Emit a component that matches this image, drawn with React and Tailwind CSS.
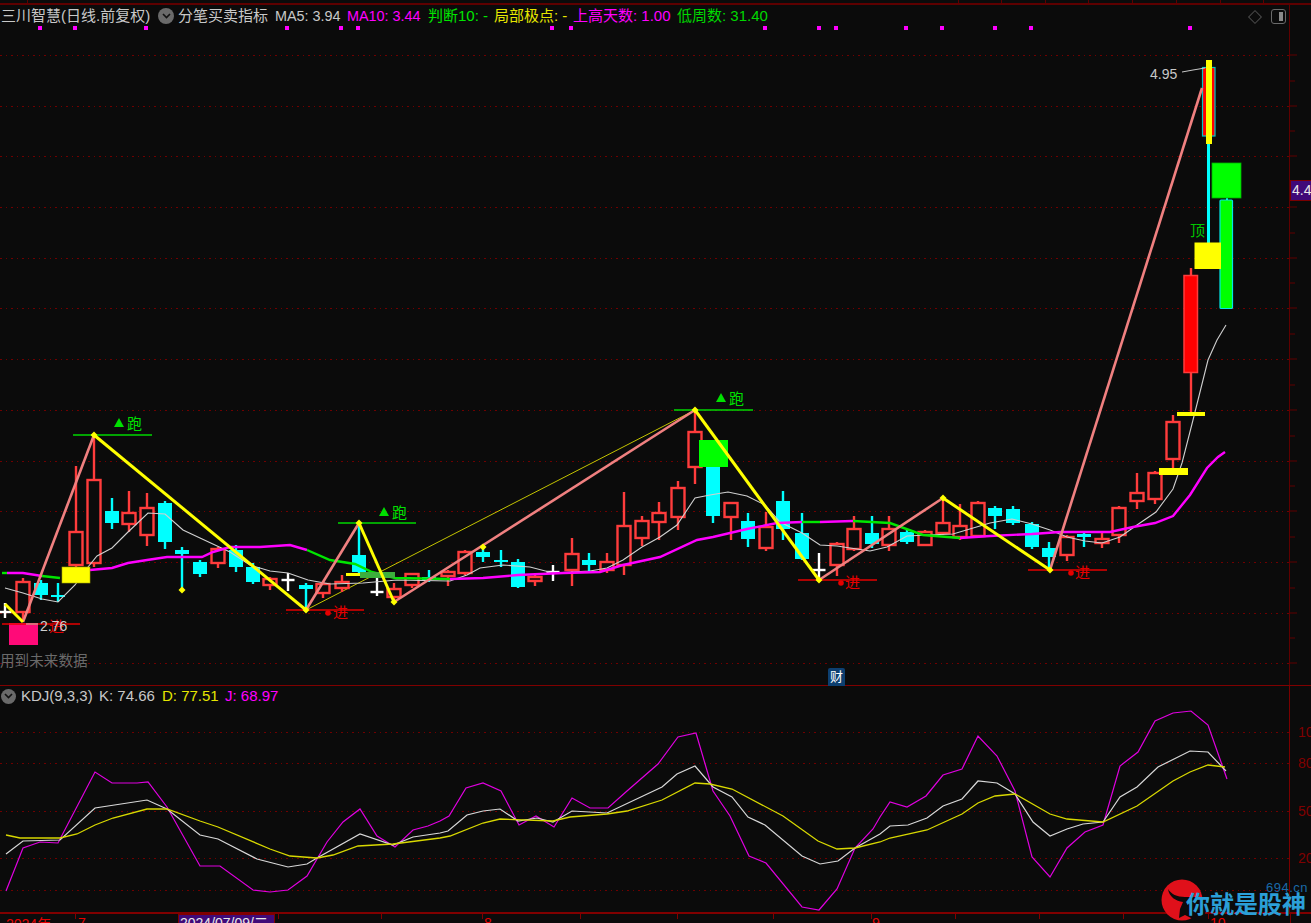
const BG = "#0b0b0b";
const FONT = '"Liberation Sans", "Noto Sans CJK SC", sans-serif';

// x, wickTop, bodyTop, bodyBottom, wickBottom, type (r = hollow red, c = solid cyan, w = white cross)
const candles = [
  [5, 603, 611, 612, 618, "w"],
  [23, 578, 582, 612, 620, "r"],
  [41, 580, 583, 595, 600, "c"],
  [58, 583, 595, 597, 602, "c"],
  [76, 466, 532, 565, 568, "r"],
  [94, 435, 480, 563, 567, "r"],
  [112, 498, 511, 523, 529, "c"],
  [129, 491, 513, 524, 532, "r"],
  [147, 493, 508, 535, 546, "r"],
  [165, 501, 503, 542, 549, "c"],
  [182, 547, 550, 554, 590, "c"],
  [200, 560, 562, 574, 577, "c"],
  [218, 547, 549, 563, 568, "r"],
  [236, 545, 550, 567, 572, "c"],
  [253, 563, 567, 582, 584, "c"],
  [270, 577, 579, 585, 590, "r"],
  [288, 573, 579, 580, 591, "w"],
  [306, 583, 585, 589, 609, "c"],
  [323, 582, 584, 593, 598, "r"],
  [342, 575, 582, 588, 592, "r"],
  [359, 523, 555, 572, 574, "c"],
  [377, 578, 591, 592, 596, "w"],
  [394, 583, 589, 597, 602, "r"],
  [412, 573, 574, 585, 588, "r"],
  [429, 570, 577, 580, 582, "c"],
  [448, 570, 572, 576, 586, "r"],
  [465, 550, 552, 573, 575, "r"],
  [483, 545, 552, 557, 562, "c"],
  [501, 550, 560, 562, 567, "c"],
  [518, 559, 562, 587, 588, "c"],
  [535, 575, 577, 581, 586, "r"],
  [553, 565, 571, 572, 581, "w"],
  [572, 538, 554, 570, 586, "r"],
  [589, 553, 560, 565, 571, "c"],
  [607, 553, 562, 570, 573, "r"],
  [624, 492, 526, 565, 575, "r"],
  [642, 516, 521, 538, 546, "r"],
  [659, 502, 513, 522, 540, "r"],
  [678, 481, 488, 517, 530, "r"],
  [695, 410, 432, 467, 484, "r"],
  [713, 440, 467, 516, 523, "c"],
  [731, 503, 503, 517, 540, "r"],
  [748, 513, 521, 539, 547, "c"],
  [766, 512, 527, 548, 551, "r"],
  [783, 491, 501, 529, 540, "c"],
  [802, 513, 533, 559, 560, "c"],
  [819, 553, 569, 570, 582, "w"],
  [837, 542, 544, 565, 576, "r"],
  [854, 516, 529, 549, 551, "r"],
  [872, 516, 533, 544, 548, "c"],
  [889, 516, 529, 545, 551, "r"],
  [907, 530, 532, 542, 544, "c"],
  [925, 530, 532, 545, 546, "r"],
  [943, 498, 523, 533, 535, "r"],
  [960, 504, 526, 537, 540, "r"],
  [978, 501, 503, 536, 538, "r"],
  [995, 506, 508, 516, 529, "c"],
  [1013, 506, 509, 523, 525, "c"],
  [1032, 522, 524, 547, 549, "c"],
  [1049, 542, 548, 557, 570, "c"],
  [1067, 535, 537, 555, 561, "r"],
  [1084, 532, 534, 537, 547, "c"],
  [1102, 532, 539, 543, 548, "r"],
  [1119, 506, 508, 535, 543, "r"],
  [1137, 473, 493, 501, 509, "r"],
  [1155, 471, 473, 499, 504, "r"],
  [1173, 415, 422, 459, 468, "r"],
];

const ma5 =
  "5,588 23,593 42,599 58,602 75,585 88,567 97,556 112,548 127,533 148,513 165,514 183,530 200,538 230,552 250,565 270,571 288,573 308,580 330,584 363,583 397,580 450,581 467,575 480,568 503,565 530,567 553,573 590,571 607,568 623,560 642,547 660,537 677,525 695,498 710,495 728,492 747,496 765,505 780,522 802,533 820,545 837,546 870,551 887,547 907,536 927,535 953,534 990,523 1012,519 1032,524 1050,530 1067,537 1085,541 1102,543 1120,537 1137,525 1156,512 1173,489 1182,463 1193,420 1208,360 1217,340 1226,325";

const maPink = [
  "7,573 23,573 42,576",
  "90,570 112,568 128,563 147,560 167,557 202,557 213,552 230,547 260,547 290,545 307,550",
  "450,579 483,578 518,575 563,573 600,572 623,565 660,557 697,540 713,537 747,529 777,523 802,522",
  "820,522 853,521",
  "960,538 990,536 1032,534 1060,532 1110,532 1133,527 1155,523 1173,516 1190,495 1207,468 1218,457 1225,452",
];
const maGreen = [
  "2,573 7,573",
  "42,576 60,578",
  "307,550 330,560 355,564 372,572 395,578 450,579",
  "802,522 820,522",
  "853,521 890,523 923,535 960,538",
];

const zigPink = [
  [23, 622, 94, 435],
  [306, 610, 359, 523],
  [394, 602, 695, 410],
  [819, 580, 943, 498],
  [1050, 570, 1202, 88],
];
const zigYellow = [
  [5, 604, 23, 622],
  [94, 435, 306, 610],
  [359, 523, 394, 602],
  [695, 410, 819, 580],
  [943, 498, 1050, 570],
];
const diamonds = [[94, 435], [182, 590], [306, 610], [359, 523], [394, 602], [483, 547], [695, 410], [819, 580], [943, 498], [1050, 570]];

const runMarks = [[114, 427], [379, 516], [716, 402]];
const entryMarks = [[328, 613, 333, 618], [841, 583, 845, 588], [1071, 573, 1075, 578]];

const priceGrid = [55, 106, 156, 207, 258, 308, 359, 410, 461, 511, 562, 613, 663];
const priceTicks = [81, 131, 182, 233, 283, 334, 385, 436, 486, 537, 588, 638];
const dots = [40, 75, 146, 287, 341, 358, 552, 571, 765, 819, 836, 906, 942, 995, 1031, 1190];
const topTicks = [27, 958, 1001, 1045, 1088, 1132, 1176, 1220, 1263];

const kdjGrid = [733, 764, 812, 859, 891];
const kdjD =
  "6,836 20,839 60,839 77,835 95,826 113,819 147,810 167,810 200,822 218,828 270,850 290,857 317,859 333,856 358,847 393,845 440,839 450,837 483,824 500,820 553,822 570,818 607,815 627,812 662,801 695,784 710,785 732,790 783,817 818,842 837,850 855,849 880,843 890,839 927,831 962,815 978,804 995,797 1015,795 1050,815 1067,820 1103,823 1137,807 1173,782 1190,773 1208,766 1225,768";
const kdjK =
  "6,855 23,842 60,841 95,809 147,801 167,810 200,836 218,840 257,860 288,868 307,865 317,859 360,835 393,846 413,838 440,834 448,832 467,816 483,812 500,810 518,822 537,819 553,823 572,812 607,814 662,788 677,775 695,767 713,788 732,798 748,818 765,826 802,857 820,865 838,862 855,849 880,835 890,827 908,826 927,819 943,807 962,800 978,782 997,784 1015,795 1033,823 1050,837 1067,830 1083,825 1103,823 1120,798 1137,788 1158,768 1190,752 1208,753 1226,772";
const kdjJ =
  "6,892 23,849 40,843 58,844 95,773 112,784 137,784 148,783 167,808 200,867 220,867 253,891 270,893 288,891 307,877 327,843 343,823 360,810 377,837 395,848 413,831 428,827 440,822 449,817 466,789 483,784 501,792 519,826 536,817 554,828 572,799 590,809 608,809 627,792 658,765 678,738 696,734 713,792 730,817 749,857 766,864 802,908 819,911 837,890 855,849 873,830 880,818 890,803 907,808 926,797 943,776 962,770 978,737 997,757 1015,792 1032,858 1050,878 1067,849 1085,833 1103,826 1120,767 1138,753 1155,722 1173,714 1191,712 1208,726 1227,780";

const timeTicks = [75, 278, 381, 482, 580, 677, 773, 871, 955, 1039, 1123, 1208];

function Candle({ c }) {
  const [x, wt, bt, bb, wb, t] = c;
  if (t === "w") {
    return (
      <g stroke="#ffffff" strokeWidth="2.4">
        <line x1={x} x2={x} y1={wt} y2={wb} />
        <line x1={x - 6.5} x2={x + 6.5} y1={bb} y2={bb} />
      </g>
    );
  }
  if (t === "c") {
    return (
      <g>
        <line x1={x} x2={x} y1={wt} y2={wb} stroke="#00ffff" strokeWidth="2.4" />
        <rect x={x - 7} y={bt} width="14" height={bb - bt} fill="#00ffff" />
      </g>
    );
  }
  return (
    <g stroke="#ff3c3c" strokeWidth="2.4">
      <line x1={x} x2={x} y1={wt} y2={bt} />
      <line x1={x} x2={x} y1={bb} y2={wb} />
      <rect x={x - 6.5} y={bt} width="13" height={bb - bt} fill={BG} />
    </g>
  );
}

function Chevron({ className }) {
  return (
    <span className={`flex items-center justify-center rounded-full bg-[#6a6a6a] ${className}`}>
      <svg width="9" height="6" viewBox="0 0 9 6">
        <path d="M1 1 L4.5 4.5 L8 1" fill="none" stroke="#111" strokeWidth="1.6" />
      </svg>
    </span>
  );
}

function Diamond({ x, y, r = 3.5 }) {
  return <path d={`M${x} ${y - r} L${x + r} ${y} L${x} ${y + r} L${x - r} ${y} Z`} fill="#ffff00" />;
}

function PriceChart() {
  return (
    <svg className="absolute inset-0" width="1290" height="686" viewBox="0 0 1290 686">
      {priceGrid.map((y) => (
        <line key={y} x1="0" x2="1290" y1={y} y2={y} stroke="#700000" strokeWidth="1" strokeDasharray="1.5 4" shapeRendering="crispEdges" />
      ))}
      {dots.map((x) => (
        <rect key={x} x={x - 2} y="26" width="4" height="4" fill="#ff00ff" />
      ))}

      {/* thin channel line */}
      <line x1="306" y1="610" x2="695" y2="410" stroke="#c4c400" strokeWidth="1" />

      {candles.map((c) => (
        <Candle key={c[0]} c={c} />
      ))}

      {/* tall candles on the right */}
      <line x1="1191" x2="1191" y1="268" y2="412" stroke="#ff3c3c" strokeWidth="2.4" />
      <rect x="1184" y="275.5" width="13.5" height="97" fill="#ff0000" stroke="#ff3c3c" strokeWidth="1.5" />
      <rect x="1207" y="143" width="3" height="100" fill="#00ffff" />
      <rect x="1226" y="197" width="2" height="4" fill="#00ffff" />
      <rect x="1220" y="200" width="12.5" height="108.5" rx="1" fill="#00ff00" stroke="#00e6e6" strokeWidth="1.2" />
      <rect x="1202.5" y="67.5" width="12.5" height="68.5" fill="#ff0000" stroke="#00c8c8" strokeWidth="1.2" />

      {/* moving averages */}
      <polyline points={ma5} fill="none" stroke="#d0d0d0" strokeWidth="1.1" />
      {maPink.map((p) => (
        <polyline key={p} points={p} fill="none" stroke="#ff00ff" strokeWidth="2.4" />
      ))}
      {maGreen.map((p) => (
        <polyline key={p} points={p} fill="none" stroke="#00e600" strokeWidth="2.4" />
      ))}

      {/* yellow and green blocks */}
      <rect x="346" y="573" width="14" height="3" fill="#ffff00" />
      <rect x="360" y="572" width="35" height="6" fill="#3caf3c" />
      <rect x="1159" y="468" width="29" height="7" fill="#ffff00" />
      <rect x="1177" y="412" width="28" height="4" fill="#ffff00" />
      <rect x="62" y="567" width="28" height="16" fill="#ffff00" stroke="#a8a800" strokeWidth="0.6" />
      <rect x="699" y="440" width="29" height="27" fill="#00ff00" />
      <rect x="1212" y="163" width="29" height="35" fill="#00ff00" stroke="#00b000" strokeWidth="0.8" />
      <rect x="1194.5" y="242.5" width="26.5" height="26.5" fill="#ffff00" />
      <rect x="1206" y="60" width="6" height="84" fill="#ffff00" />
      <rect x="9" y="623" width="29" height="22" fill="#ff0a78" />

      {/* levels */}
      {[[73, 152, 435], [338, 416, 523], [674, 753, 410]].map(([a, b, y]) => (
        <line key={a} x1={a} x2={b} y1={y} y2={y} stroke="#00d800" strokeWidth="1.3" />
      ))}
      {[[2, 80, 624], [286, 364, 610], [798, 877, 580], [1028, 1107, 570]].map(([a, b, y]) => (
        <line key={a} x1={a} x2={b} y1={y} y2={y} stroke="#e60000" strokeWidth="1.3" />
      ))}

      {/* zigzag */}
      {zigPink.map(([a, b, c, d]) => (
        <line key={a} x1={a} y1={b} x2={c} y2={d} stroke="#f08080" strokeWidth="2.6" />
      ))}
      {zigYellow.map(([a, b, c, d]) => (
        <line key={a} x1={a} y1={b} x2={c} y2={d} stroke="#ffff00" strokeWidth="3" />
      ))}
      {diamonds.map(([x, y]) => (
        <Diamond key={x} x={x} y={y} />
      ))}

      {/* labels on the chart */}
      <g style={{ fontFamily: FONT }}>
        {runMarks.map(([x, y]) => (
          <g key={x}>
            <path d={`M${x} ${y} L${x + 5} ${y - 9} L${x + 10} ${y} Z`} fill="#00e000" />
            <text x={x + 13} y={y + 1.5} fontSize="15" fill="#00e000">跑</text>
          </g>
        ))}
        {entryMarks.map(([cx, cy, tx, ty]) => (
          <g key={cx}>
            <circle cx={cx} cy={cy} r="2.8" fill="#e60000" />
            <text x={tx} y={ty} fontSize="15" fill="#e60000">进</text>
          </g>
        ))}
        <text x="49" y="632" fontSize="15" fill="#e60000">进</text>
        <text x="40" y="631" fontSize="14" fill="#cfcfcf">2.76</text>
        <polyline points="26,624 38,624" fill="none" stroke="#cfcfcf" strokeWidth="1" />
        <text x="1150" y="79" fontSize="14" fill="#c8c8c8">4.95</text>
        <polyline points="1182,72 1193,70 1205,68" fill="none" stroke="#c8c8c8" strokeWidth="1" />
        <text x="1190" y="236" fontSize="15" fill="#00c800">顶</text>
        <text x="0" y="666" fontSize="14.6" fill="#6a6a6a">用到未来数据</text>
      </g>
    </svg>
  );
}

function KdjChart() {
  return (
    <svg className="absolute inset-0" width="1290" height="227" viewBox="0 687 1290 227">
      {kdjGrid.map((y) => (
        <line key={y} x1="0" x2="1290" y1={y} y2={y} stroke="#700000" strokeWidth="1" strokeDasharray="1.5 4" shapeRendering="crispEdges" />
      ))}
      <polyline points={kdjJ} fill="none" stroke="#e000e0" strokeWidth="1.2" />
      <polyline points={kdjK} fill="none" stroke="#d8d8d8" strokeWidth="1.2" />
      <polyline points={kdjD} fill="none" stroke="#d8d800" strokeWidth="1.3" />
    </svg>
  );
}

function RightAxis({ ticks, offset }) {
  return (
    <svg width="21" height="100%" className="absolute inset-0">
      {ticks.map((y, i) => (
        <line key={y} x1="0" x2={i % 2 === 0 ? 7 : 5} y1={y - offset} y2={y - offset} stroke="#600000" strokeWidth="1" />
      ))}
    </svg>
  );
}

function Legend() {
  return (
    <div className="absolute left-0 top-[8px] flex h-[16px] items-center text-[15px] leading-[16px] text-[#c8c8c8] whitespace-nowrap">
      <span className="ml-[1px] w-[157px]">三川智慧(日线.前复权)</span>
      <Chevron className="h-[16px] w-[16px]" />
      <span className="ml-[4px] w-[97px]">分笔买卖指标</span>
      <span className="w-[72px] text-[14.4px]">MA5: 3.94</span>
      <span className="w-[81px] text-[14.4px] text-[#ff00ff]">MA10: 3.44</span>
      <span className="w-[66px] text-[#00e600]">判断10: -</span>
      <span className="w-[79px] text-[#e6e600]">局部极点: -</span>
      <span className="w-[104px] text-[#ff00ff]">上高天数: 1.00</span>
      <span className="text-[#00d800]">低周数: 31.40</span>
    </div>
  );
}

function KdjLegend() {
  return (
    <div className="absolute left-0 top-[2px] flex h-[16px] items-center text-[15px] leading-[16px] whitespace-nowrap">
      <Chevron className="ml-[1px] h-[15px] w-[15px]" />
      <span className="ml-[5px] w-[78px] text-[#c8c8c8]">KDJ(9,3,3)</span>
      <span className="w-[63px] text-[#c8c8c8]">K: 74.66</span>
      <span className="w-[63px] text-[#e6e600]">D: 77.51</span>
      <span className="text-[#ff00ff]">J: 68.97</span>
    </div>
  );
}

function Logo() {
  return (
    <div className="absolute left-[1161px] top-[879px] h-[44px] w-[150px]">
      <svg width="44" height="44" viewBox="0 0 44 44" className="absolute left-0 top-0">
        <circle cx="21" cy="21" r="20.5" fill="#e0101a" />
        <path
          d="M7 10 C10 15 16 18 24 18 L44 18 L44 39 L30 39 L24 36 L18 39 L19 30 L22 23 C15 22 8 18 7 10 Z"
          fill="#0b0b0b"
        />
      </svg>
      <span
        className="absolute left-[25px] top-[15px] text-[24px] font-bold leading-[22px] text-[#2b9fd8] whitespace-nowrap"
        style={{ fontFamily: FONT }}
      >
        你就是股神
      </span>
      <span className="absolute left-[105px] top-[3px] text-[13px] leading-[12px] tracking-[0.5px] text-[#1a6aa8]">
        694.cn
      </span>
    </div>
  );
}

export default function App() {
  return (
    <div
      className="relative flex h-[923px] w-[1311px] flex-col overflow-hidden bg-[#0b0b0b]"
      style={{ fontFamily: FONT }}
    >
      {/* top ruler */}
      <div className="relative h-[5px] shrink-0 border-b-[2px] border-[#5e0000]">
        {topTicks.map((x) => (
          <span key={x} style={{ left: x }} className="absolute top-0 h-[3px] w-[1px] bg-[#5e0000]" />
        ))}
      </div>

      {/* price panel */}
      <div className="flex h-[681px] shrink-0 border-b-[1px] border-[#800000]">
        <div className="relative w-[1290px] shrink-0 border-r-[1px] border-[#600000]">
          <div className="absolute left-0 top-[-5px] h-[686px] w-[1290px]">
            <PriceChart />
            <Legend />
            <div className="absolute left-[1250px] top-[9px] flex items-center gap-[11px]">
              <span className="h-[10px] w-[10px] rotate-45 border border-[#4a4a4a]" />
              <span className="flex h-[15px] w-[15px] justify-end rounded-[3px] border-[1.5px] border-[#6a6a6a] p-[2px]">
                <span className="h-full w-[4px] bg-[#8a8a8a]" />
              </span>
            </div>
            <span className="absolute left-[828px] top-[668px] flex h-[18px] w-[17px] items-center justify-center rounded-t-[2px] bg-[#0d3f70] text-[13px] text-white">
              财
            </span>
          </div>
        </div>
        <div className="relative flex-1">
          <RightAxis ticks={[...priceGrid, ...priceTicks].sort((a, b) => a - b)} offset={5} />
          <span className="absolute left-0 top-[175px] flex h-[21px] w-[24px] items-center border border-[#7a0000] bg-[#400a78] pl-[1px] text-[14px] text-[#e8e8e8]">
            4.4
          </span>
        </div>
      </div>

      {/* KDJ panel */}
      <div className="flex h-[228px] shrink-0 border-b-[2px] border-[#800000]">
        <div className="relative w-[1290px] shrink-0 border-r-[1px] border-[#7a0000]">
          <KdjChart />
          <KdjLegend />
        </div>
        <div className="relative flex-1 overflow-hidden text-[14px] leading-[16px] text-[#800000]">
          <span className="absolute left-[8px] top-[38px]">100</span>
          <span className="absolute left-[8px] top-[69px]">80</span>
          <span className="absolute left-[8px] top-[117px]">50</span>
          <span className="absolute left-[8px] top-[164px]">20</span>
        </div>
      </div>

      {/* time axis */}
      <div className="relative flex-1 overflow-hidden text-[14px] leading-[16px]">
        {timeTicks.map((x) => (
          <span key={x} style={{ left: x }} className="absolute top-0 h-[5px] w-[1px] bg-[#800000]" />
        ))}
        <span className="absolute left-[1290px] top-0 h-full w-[1px] bg-[#7a0000]" />
        <span className="absolute left-[6px] top-[2px] text-[#e60000]">2024年</span>
        <span className="absolute left-[78px] top-[1px] text-[#e60000]">7</span>
        <span className="absolute left-[178px] top-0 h-[10px] w-[97px] border border-[#800000] bg-[#400a78] pl-[1px] text-[#e8e8e8]">
          2024/07/09/二
        </span>
        <span className="absolute left-[484px] top-[1px] text-[#e60000]">8</span>
        <span className="absolute left-[872px] top-[1px] text-[#e60000]">9</span>
        <span className="absolute left-[1210px] top-[1px] text-[#e60000]">10</span>
      </div>

      <Logo />
    </div>
  );
}
